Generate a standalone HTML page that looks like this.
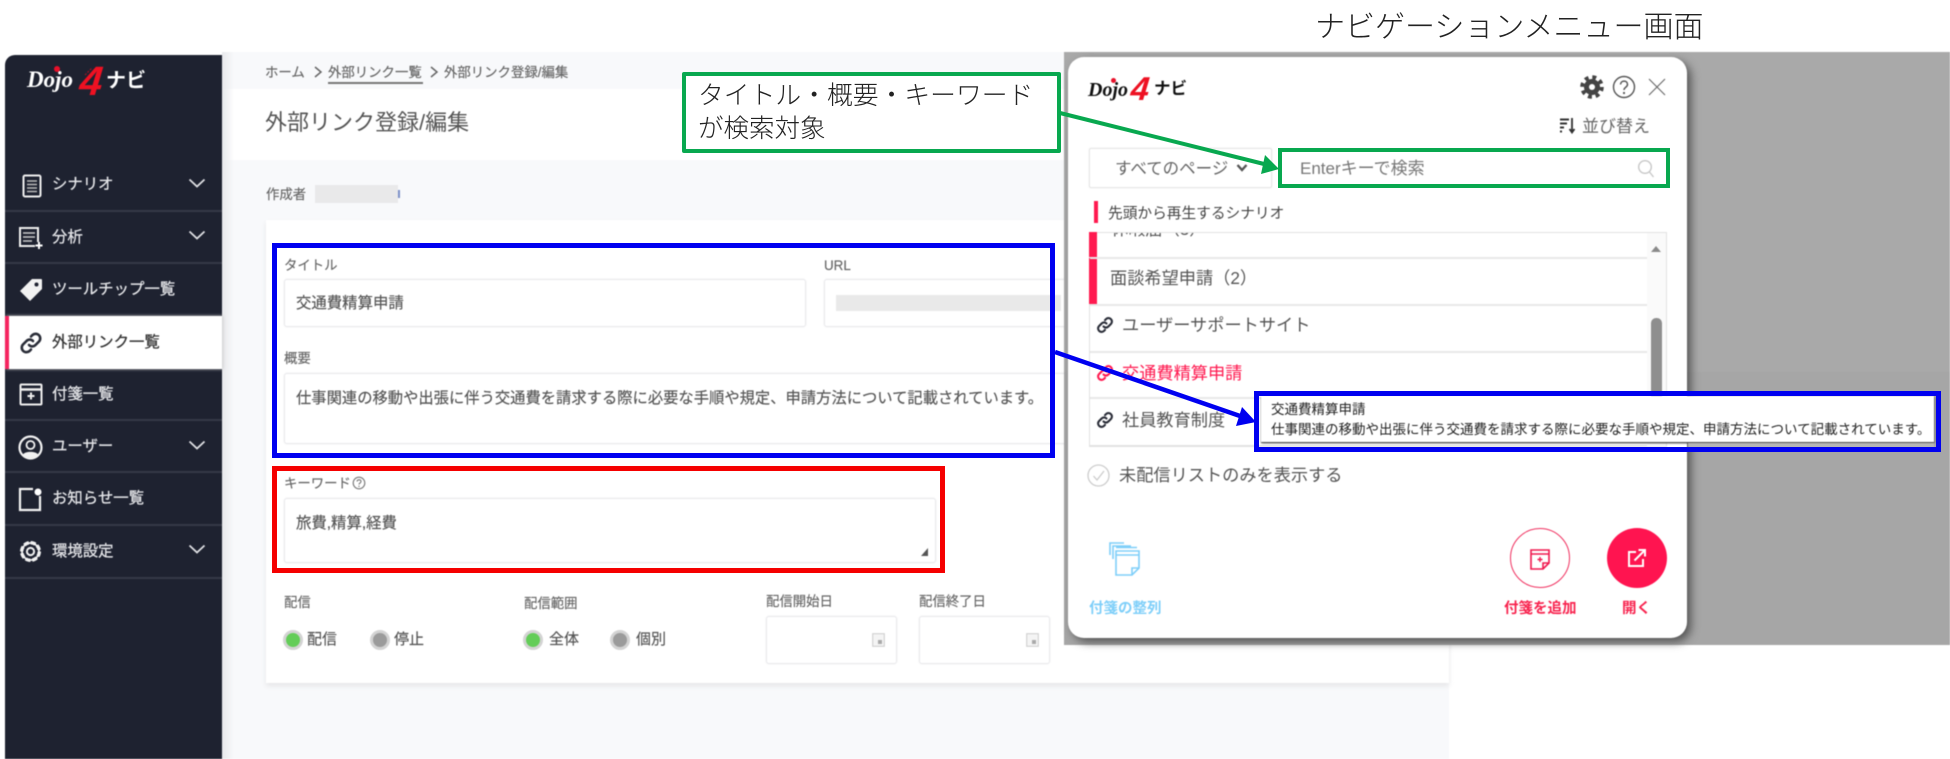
<!DOCTYPE html>
<html lang="ja"><head><meta charset="utf-8"><title>ナビゲーションメニュー画面</title>
<style>
html,body{margin:0;padding:0;background:#fff}
body{width:1950px;height:759px;position:relative;overflow:hidden;font-family:"Liberation Sans","Noto Sans CJK JP",sans-serif;color:#444}
.a,.t,svg{position:absolute}
.t{white-space:nowrap;line-height:20px;margin-top:1px}
#ui{position:absolute;left:0;top:0;width:1950px;height:759px;filter:blur(.45px)}
.side{font-size:15.4px;color:#e4e5e8;left:52px;-webkit-text-stroke:.25px currentColor}
.div{position:absolute;left:5px;width:217px;height:2px;background:#353947}
.chev{left:188px;width:18px;height:10px}
.lab{font-size:13.4px;color:#666;-webkit-text-stroke:.15px currentColor}
.val{font-size:15.4px;color:#555;-webkit-text-stroke:.15px currentColor}
.box{position:absolute;background:#fff;border:1px solid #e9e9ec;border-radius:3px;box-sizing:border-box;box-shadow:0 0 2px #eee}
.radio{position:absolute;width:20px;height:20px;border-radius:50%;box-sizing:border-box;border:3px solid #d3d3d3}
.li{position:absolute;left:1090px;width:557px;height:2px;background:#e8e8e8}
.item{font-size:17.2px;color:#555}
.rect{position:absolute;box-sizing:border-box}
</style></head><body>

<div class="t" style="left:1315px;top:7px;font-size:30px;line-height:40px;color:#222;font-weight:300">ナビゲーションメニュー画面</div>

<div id="ui">
<!-- page background -->
<div class="a" style="left:222px;top:52px;width:1227px;height:707px;background:#f8f9fb"></div>
<div class="a" style="left:222px;top:89px;width:1227px;height:71px;background:#fff"></div>
<div class="a" style="left:222px;top:52px;width:12px;height:707px;background:linear-gradient(90deg,#e8e9ec,#f8f9fb00)"></div>

<!-- sidebar -->
<div class="a" style="left:5px;top:55px;width:217px;height:704px;background:#1e2230;border-top-left-radius:10px"></div>
<div class="t" style="left:27px;top:67px;font:italic bold 23px/24px 'Liberation Serif','Noto Sans CJK JP',serif;color:#fff">Dojo</div>
<div class="a" style="left:54px;top:66px;width:6px;height:6px;border-radius:50%;background:#e8102a"></div>
<svg style="left:84px;top:64px" width="14" height="14" viewBox="0 0 14 14"><path d="M1 11 8 4M4 13l9-9" stroke="#a01526" stroke-width="1.200" stroke-dasharray="2 1.500"/></svg>
<div class="t" style="left:80px;top:59px;font:italic bold 41px/42px 'Liberation Sans',sans-serif;color:#ee1122;transform:skewX(-6deg)">4</div>
<div class="t" style="left:106px;top:66px;font-size:20px;line-height:28px;font-weight:700;color:#fff">ナビ</div>

<div class="div" style="top:210px"></div><div class="div" style="top:262px"></div>
<div class="a" style="left:5px;top:316px;width:217px;height:53px;background:#fff;box-shadow:1px 0 3px #ccc"></div>
<div class="a" style="left:5px;top:316px;width:4px;height:53px;background:#f5245f"></div>
<div class="div" style="top:419px"></div><div class="div" style="top:471px"></div><div class="div" style="top:524px"></div><div class="div" style="top:577px"></div>

<div class="t side" style="top:174px">シナリオ</div>
<div class="t side" style="top:227px">分析</div>
<div class="t side" style="top:279px">ツールチップ一覧</div>
<div class="t side" style="top:332px;color:#333">外部リンク一覧</div>
<div class="t side" style="top:384px">付箋一覧</div>
<div class="t side" style="top:436px">ユーザー</div>
<div class="t side" style="top:488px">お知らせ一覧</div>
<div class="t side" style="top:541px">環境設定</div>

<svg class="chev" style="top:178px" viewBox="0 0 18 10"><path d="M1.500 1.500 9 8.500 16.500 1.500" fill="none" stroke="#dfe0e4" stroke-width="1.800"/></svg>
<svg class="chev" style="top:230px" viewBox="0 0 18 10"><path d="M1.500 1.500 9 8.500 16.500 1.500" fill="none" stroke="#dfe0e4" stroke-width="1.800"/></svg>
<svg class="chev" style="top:440px" viewBox="0 0 18 10"><path d="M1.500 1.500 9 8.500 16.500 1.500" fill="none" stroke="#dfe0e4" stroke-width="1.800"/></svg>
<svg class="chev" style="top:544px" viewBox="0 0 18 10"><path d="M1.500 1.500 9 8.500 16.500 1.500" fill="none" stroke="#dfe0e4" stroke-width="1.800"/></svg>

<!-- sidebar icons -->
<svg style="left:22px;top:174px" width="20" height="24" viewBox="0 0 20 24"><rect x="1.500" y="1.500" width="17" height="21" rx="1.500" fill="none" stroke="#eee" stroke-width="2"/><path d="M5 7h10M5 10.500h10M5 14h10M5 17.500h10" stroke="#bbb" stroke-width="1.600"/></svg>
<svg style="left:18px;top:226px" width="26" height="24" viewBox="0 0 26 24"><path d="M20 16V2H2v18h15" fill="none" stroke="#eee" stroke-width="2"/><path d="M5 7h12M5 11h12M5 15h9" stroke="#ccc" stroke-width="1.600"/><path d="M21 16v7M17.500 19.500h7" stroke="#fff" stroke-width="2"/></svg>
<svg style="left:19px;top:278px" width="24" height="24" viewBox="0 0 24 24"><path d="M13 1h9a1 1 0 0 1 1 1v9L11 23 1 13z" fill="#f2f2f2"/><circle cx="17.500" cy="6.500" r="2" fill="#1e2230"/></svg>
<svg style="left:19px;top:331px" width="24" height="24" viewBox="0 0 24 24" fill="none" stroke="#2a2d38" stroke-width="2.600" stroke-linecap="round"><path d="M10 14a4.500 4.500 0 0 0 6.500 0l3.500-3.500a4.600 4.600 0 0 0-6.500-6.500L12 5.500"/><path d="M14 10a4.500 4.500 0 0 0-6.500 0L4 13.500A4.600 4.600 0 0 0 10.500 20l1.500-1.500"/></svg>
<svg style="left:19px;top:383px" width="24" height="24" viewBox="0 0 24 24" fill="none" stroke="#eee" stroke-width="2"><rect x="1.500" y="1.500" width="21" height="20" rx="1"/><path d="M1.500 6.500h21" stroke-width="2.400"/><path d="M12 9.500v7M8.500 13h7" stroke-width="2"/></svg>
<svg style="left:18px;top:435px" width="25" height="25" viewBox="0 0 25 25"><circle cx="12.500" cy="12.500" r="11" fill="none" stroke="#f2f2f2" stroke-width="2.200"/><circle cx="12.500" cy="10" r="4" fill="none" stroke="#f2f2f2" stroke-width="1.800"/><path d="M5 19.500c2-3.500 13-3.500 15 0-3 4-12 4-15 0z" fill="#f2f2f2"/></svg>
<svg style="left:18px;top:487px" width="25" height="25" viewBox="0 0 25 25"><path d="M15 2H2v21h20V9" fill="none" stroke="#f2f2f2" stroke-width="2.200"/><circle cx="20" cy="5" r="3.500" fill="#fff"/></svg>
<svg style="left:18px;top:539px" width="25" height="25" viewBox="0 0 25 25" fill="none" stroke="#f2f2f2"><circle cx="12.500" cy="12.500" r="8.800" stroke-width="3.400" stroke-dasharray="5 1.900"/><circle cx="12.500" cy="12.500" r="8.500" stroke-width="1.800"/><circle cx="12.500" cy="12.500" r="3.600" stroke-width="2"/></svg>

<!-- main header -->
<div class="t" style="left:265px;top:62px;font-size:13.4px;color:#666;-webkit-text-stroke:.15px #666">ホーム</div>
<svg style="left:313px;top:65px" width="10" height="14" viewBox="0 0 10 14"><path d="M2 2l6 5-6 5" fill="none" stroke="#666" stroke-width="1.500"/></svg>
<div class="t" style="left:328px;top:62px;font-size:13.4px;color:#666;-webkit-text-stroke:.15px #666">外部リンク一覧</div>
<div class="a" style="left:328px;top:82px;width:95px;height:1.500px;background:#777"></div>
<svg style="left:429px;top:65px" width="10" height="14" viewBox="0 0 10 14"><path d="M2 2l6 5-6 5" fill="none" stroke="#666" stroke-width="1.500"/></svg>
<div class="t" style="left:444px;top:62px;font-size:13.4px;color:#666;-webkit-text-stroke:.15px #666">外部リンク登録/編集</div>
<div class="t" style="left:265px;top:107px;font-size:22px;line-height:30px;color:#555">外部リンク登録/編集</div>

<div class="t lab" style="left:266px;top:184px">作成者</div>
<div class="a" style="left:315px;top:185px;width:83px;height:18px;background:#e9e9ea"></div>
<div class="a" style="left:398px;top:190px;width:1.500px;height:8px;background:#7c90c8"></div>

<!-- card -->
<div class="a" style="left:266px;top:220px;width:1183px;height:463px;background:#fff;box-shadow:0 3px 5px #e6e6e8"></div>

<div class="t lab" style="left:284px;top:255px">タイトル</div>
<div class="box" style="left:284px;top:279px;width:522px;height:48px"></div>
<div class="t val" style="left:296px;top:293px">交通費精算申請</div>
<div class="t lab" style="left:824px;top:255px">URL</div>
<div class="box" style="left:824px;top:279px;width:250px;height:48px"></div>
<div class="a" style="left:836px;top:295px;width:225px;height:16px;background:#e9e9e9"></div>
<div class="t lab" style="left:284px;top:348px">概要</div>
<div class="box" style="left:284px;top:373px;width:790px;height:71px"></div>
<div class="t val" style="left:296px;top:388px;font-size:15.3px">仕事関連の移動や出張に伴う交通費を請求する際に必要な手順や規定、申請方法について記載されています。</div>
<div class="t lab" style="left:284px;top:473px">キーワード</div>
<svg style="left:352px;top:476px" width="14" height="14" viewBox="0 0 14 14"><circle cx="7" cy="7" r="5.800" fill="none" stroke="#777" stroke-width="1.100"/><path d="M5 5.500c.3-2.300 4-2.300 4 0 0 1.500-2 1.500-2 3" fill="none" stroke="#777" stroke-width="1.100"/><circle cx="7" cy="10.300" r=".7" fill="#777"/></svg>
<div class="box" style="left:284px;top:498px;width:652px;height:65px"></div>
<div class="t val" style="left:296px;top:513px">旅費,精算,経費</div>
<svg style="left:920px;top:547px" width="10" height="10" viewBox="0 0 10 10"><path d="M8 1v8H1z" fill="#555"/></svg>

<div class="t lab" style="left:284px;top:592px">配信</div>
<div class="radio" style="left:283px;top:630px;background:#63cd58"></div>
<div class="t val" style="left:307px;top:629px;font-size:15px">配信</div>
<div class="radio" style="left:370px;top:630px;background:#9b9b9b"></div>
<div class="t val" style="left:394px;top:629px;font-size:15px">停止</div>
<div class="t lab" style="left:524px;top:593px">配信範囲</div>
<div class="radio" style="left:523px;top:630px;background:#63cd58"></div>
<div class="t val" style="left:549px;top:629px;font-size:15px">全体</div>
<div class="radio" style="left:610px;top:630px;background:#9b9b9b"></div>
<div class="t val" style="left:636px;top:629px;font-size:15px">個別</div>
<div class="t lab" style="left:766px;top:591px">配信開始日</div>
<div class="t lab" style="left:919px;top:591px">配信終了日</div>
<div class="box" style="left:766px;top:616px;width:131px;height:48px"></div>
<div class="box" style="left:919px;top:616px;width:131px;height:48px"></div>
<svg style="left:872px;top:633px" width="13" height="14" viewBox="0 0 13 14"><rect x=".7" y=".7" width="11.600" height="12.600" fill="#f4f4f4" stroke="#ccc"/><rect x="6" y="7" width="4" height="4" fill="#aaa"/></svg>
<svg style="left:1026px;top:633px" width="13" height="14" viewBox="0 0 13 14"><rect x=".7" y=".7" width="11.600" height="12.600" fill="#f4f4f4" stroke="#ccc"/><rect x="6" y="7" width="4" height="4" fill="#aaa"/></svg>

<!-- grey overlay -->
<div class="a" style="left:1064px;top:52px;width:886px;height:593px;background:#a9a9a9"></div>
<div class="a" style="left:1064px;top:372px;width:886px;height:273px;background:#a6a6a6"></div>

<!-- popup -->
<div class="a" style="left:1068px;top:57px;width:619px;height:581px;background:#fff;border-radius:16px;box-shadow:4px 4px 9px #555"></div>

<div class="t" style="left:1088px;top:78px;font:italic bold 20px/22px 'Liberation Serif','Noto Sans CJK JP',serif;color:#111">Dojo</div>
<div class="a" style="left:1111px;top:78px;width:5px;height:5px;border-radius:50%;background:#e8102a"></div>
<div class="t" style="left:1131px;top:70px;font:italic bold 33px/36px 'Liberation Sans',sans-serif;color:#ee1122;transform:skewX(-6deg)">4</div>
<div class="t" style="left:1154px;top:76px;font-size:16.500px;line-height:24px;font-weight:700;color:#111">ナビ</div>

<svg style="left:1580px;top:75px" width="24" height="24" viewBox="0 0 24 24"><circle cx="12" cy="12" r="8" fill="#444"/><circle cx="12" cy="12" r="9.800" fill="none" stroke="#444" stroke-width="4" stroke-dasharray="3.900 3.800"/><circle cx="12" cy="12" r="3" fill="#fff"/></svg>
<svg style="left:1612px;top:75px" width="24" height="24" viewBox="0 0 24 24" fill="none" stroke="#555"><circle cx="12" cy="12" r="10.500" stroke-width="1.400"/><path d="M8.500 9.500c.3-4.500 7-4.500 7 0 0 2.700-3.500 2.700-3.500 5.500" stroke-width="1.500"/><circle cx="12" cy="18" r="1.100" fill="#555" stroke="none"/></svg>
<svg style="left:1648px;top:78px" width="18" height="18" viewBox="0 0 18 18"><path d="M1 1l16 16M17 1 1 17" stroke="#666" stroke-width="1.100"/></svg>

<svg style="left:1559px;top:117px" width="17" height="17" viewBox="0 0 17 17"><path d="M1 2.500h9M1 6.500h7M1 10.500h4M1 14.500h2" stroke="#333" stroke-width="2"/><path d="M13 1v14M10.500 12 13 15.500 15.500 12" fill="none" stroke="#333" stroke-width="1.800"/></svg>
<div class="t" style="left:1582px;top:116px;font-size:17px;color:#666">並び替え</div>

<div class="box" style="left:1089px;top:148px;width:183px;height:40px;border-color:#e6e6e6;border-radius:2px"></div>
<div class="t" style="left:1115px;top:158px;font-size:16.500px;color:#666">すべてのページ</div>
<svg style="left:1236px;top:163px" width="12" height="10" viewBox="0 0 12 10"><path d="M1.500 2 6 7l4.500-5" fill="none" stroke="#555" stroke-width="2.400"/></svg>
<div class="t" style="left:1300px;top:158px;font-size:17px;color:#777">Enterキーで検索</div>
<svg style="left:1637px;top:159px" width="18" height="19" viewBox="0 0 18 19" fill="none" stroke="#c8c8c8" stroke-width="1.400"><circle cx="8" cy="8" r="6.300"/><path d="M12.500 13l4 5"/></svg>

<div class="a" style="left:1094px;top:201px;width:4px;height:22px;background:#ff1a50"></div>
<div class="t" style="left:1108px;top:203px;font-size:14.700px;color:#444">先頭から再生するシナリオ</div>

<!-- list -->
<div class="a" style="left:1089px;top:232px;width:578px;height:215px;background:#fff;border:1px solid #e2e2e2;box-sizing:border-box;overflow:hidden">
  <div class="t" style="left:21px;top:-15px;font-size:17.2px;color:#555">休暇届（3）</div>
</div>
<div class="a" style="left:1089px;top:232px;width:8px;height:25px;background:#ff1a50"></div>
<div class="a" style="left:1089px;top:258px;width:8px;height:46px;background:#ff1a50"></div>
<div class="li" style="top:257px"></div><div class="li" style="top:304px"></div><div class="li" style="top:351px"></div><div class="li" style="top:397px"></div>
<div class="a" style="left:1090px;top:445px;width:577px;height:2px;background:#e2e2e2"></div>
<div class="a" style="left:1647px;top:233px;width:19px;height:213px;background:#fafafa"></div>
<svg style="left:1650px;top:245px" width="12" height="8" viewBox="0 0 12 8"><path d="M6 1l5 6H1z" fill="#8a8a8a"/></svg>
<div class="a" style="left:1651px;top:318px;width:11px;height:90px;background:#8e8e8e;border-radius:5px 5px 0 0"></div>

<div class="t item" style="left:1110px;top:267px">面談希望申請（2）</div>
<svg style="left:1096px;top:316px" width="18" height="18" viewBox="0 0 24 24" fill="none" stroke="#2a2d38" stroke-width="2.800" stroke-linecap="round"><path d="M10 14a4.500 4.500 0 0 0 6.500 0l3.500-3.500a4.600 4.600 0 0 0-6.500-6.500L12 5.500"/><path d="M14 10a4.500 4.500 0 0 0-6.500 0L4 13.500A4.600 4.600 0 0 0 10.500 20l1.500-1.500"/></svg>
<div class="t item" style="left:1122px;top:314px">ユーザーサポートサイト</div>
<svg style="left:1096px;top:364px" width="18" height="18" viewBox="0 0 24 24" fill="none" stroke="#ff1a50" stroke-width="2.800" stroke-linecap="round"><path d="M10 14a4.500 4.500 0 0 0 6.500 0l3.500-3.500a4.600 4.600 0 0 0-6.500-6.500L12 5.500"/><path d="M14 10a4.500 4.500 0 0 0-6.500 0L4 13.500A4.600 4.600 0 0 0 10.500 20l1.500-1.500"/></svg>
<div class="t item" style="left:1122px;top:362px;color:#ff1a50">交通費精算申請</div>
<svg style="left:1096px;top:411px" width="18" height="18" viewBox="0 0 24 24" fill="none" stroke="#2a2d38" stroke-width="2.800" stroke-linecap="round"><path d="M10 14a4.500 4.500 0 0 0 6.500 0l3.500-3.500a4.600 4.600 0 0 0-6.500-6.500L12 5.500"/><path d="M14 10a4.500 4.500 0 0 0-6.500 0L4 13.500A4.600 4.600 0 0 0 10.500 20l1.500-1.500"/></svg>
<div class="t item" style="left:1122px;top:409px">社員教育制度</div>

<svg style="left:1087px;top:464px" width="23" height="23" viewBox="0 0 23 23" fill="none" stroke="#ccc" stroke-width="1.300"><circle cx="11.500" cy="11.500" r="10.500"/><path d="M6.500 12l3.500 4 7-9"/></svg>
<div class="t item" style="left:1119px;top:464px">未配信リストのみを表示する</div>

<!-- bottom actions -->
<svg style="left:1108px;top:541px" width="36" height="36" viewBox="0 0 36 36" fill="none" stroke="#7fcff9" stroke-width="1.600"><path d="M2 14V2h14M5 18V5h18M8 6.500h21"/><path d="M8 10h23v17l-7 7H8z"/><path d="M8 14h23"/><path d="M31 27h-7v7"/></svg>
<div class="t" style="left:1089px;top:598px;font-size:14.500px;font-weight:700;color:#7fcff9">付箋の整列</div>

<div class="a" style="left:1510px;top:528px;width:60px;height:60px;border:1.500px solid #f0305f;border-radius:50%;box-sizing:border-box"></div>
<svg style="left:1529px;top:548px" width="22" height="22" viewBox="0 0 22 22" fill="none" stroke="#f0184e" stroke-width="1.600"><path d="M2 2h18v13l-6 6H2z"/><path d="M2 6h18" stroke-width="1.400"/><path d="M11 9v5M8.500 11.500h5" stroke-width="1.400"/><path d="M20 15h-6v6"/></svg>
<div class="t" style="left:1504px;top:598px;font-size:14.500px;font-weight:700;color:#f8244f">付箋を追加</div>

<div class="a" style="left:1607px;top:528px;width:60px;height:60px;background:#ff1450;border-radius:50%"></div>
<svg style="left:1627px;top:548px" width="20" height="20" viewBox="0 0 20 20" fill="none" stroke="#fff" stroke-width="2"><path d="M9 4H2v14h14v-7"/><path d="M7.500 12.500 18 2M11.500 2H18v6.500"/></svg>
<div class="t" style="left:1622px;top:598px;font-size:14.500px;font-weight:700;color:#f8244f">開く</div>

<!-- tooltip -->
<div class="a" style="left:1261px;top:396px;width:673px;height:46px;background:#fff;box-shadow:0 1px 1px #444,1px 1px 2px #666"></div>
<div class="a" style="left:1688px;top:443px;width:246px;height:5px;background:#b5b5b5"></div>
<div class="t" style="left:1271px;top:399px;font-size:13.500px;color:#222">交通費精算申請</div>
<div class="t" style="left:1271px;top:419px;font-size:13.500px;color:#222">仕事関連の移動や出張に伴う交通費を請求する際に必要な手順や規定、申請方法について記載されています。</div>
</div>

<!-- annotation rectangles -->
<div class="rect" style="left:272px;top:243px;width:783px;height:215px;border:5px solid #0000f0"></div>
<div class="rect" style="left:272px;top:466px;width:673px;height:107px;border:5px solid #f50000"></div>
<div class="rect" style="left:1254px;top:391px;width:687px;height:61px;border:5px solid #0000f0"></div>
<div class="rect" style="left:1278px;top:148px;width:392px;height:40px;border:4px solid #08a84f"></div>
<div class="rect" style="left:682px;top:72px;width:379px;height:81px;border:4.500px solid #08a84f;background:#fff;border-radius:2px"></div>
<div class="t" style="left:698px;top:80px;font-size:25.800px;line-height:30px;color:#222;font-weight:300">タイトル・概要・キーワード</div>
<div class="t" style="left:698px;top:113px;font-size:25.500px;line-height:30px;color:#222;font-weight:300">が検索対象</div>

<!-- arrows -->
<svg style="left:0;top:0" width="1950" height="759" viewBox="0 0 1950 759">
<path d="M1060 113 1264 164" stroke="#08a84f" stroke-width="4" fill="none"/>
<path d="M1279 169 1261 174 1265 155z" fill="#08a84f"/>
<path d="M1055 352 1240 416" stroke="#0000f0" stroke-width="4.500" fill="none"/>
<path d="M1256 422 1236 426 1242 407z" fill="#0000f0"/>
</svg>
</body></html>
